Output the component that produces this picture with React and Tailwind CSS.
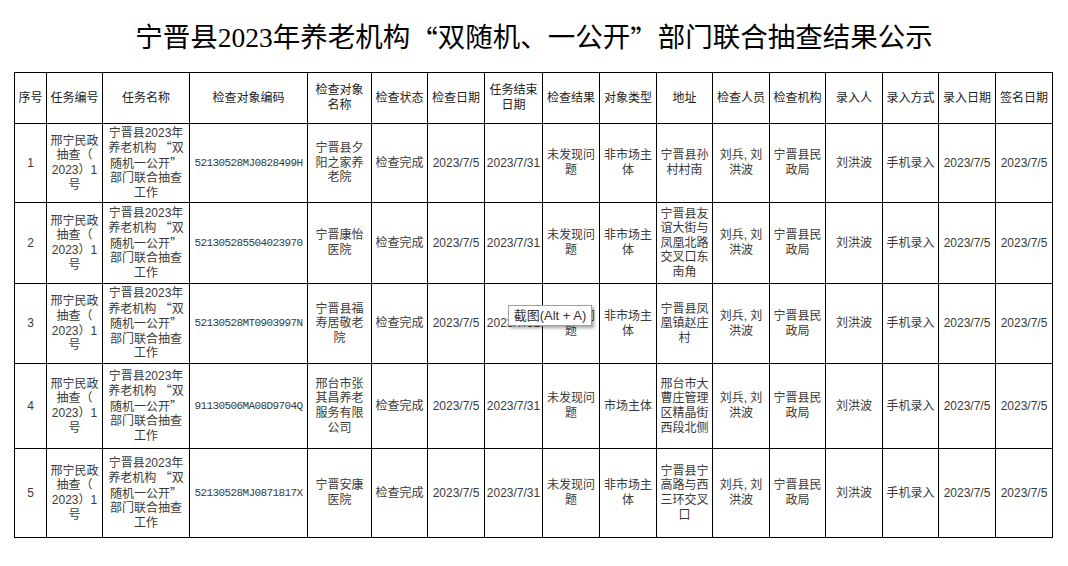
import React from "react";

// column widths, written out so tailwind picks them up
const cols = [
  "w-[32px]", "w-[56px]", "w-[87px]", "w-[118px]", "w-[64px]", "w-[56px]",
  "w-[57px]", "w-[58px]", "w-[57px]", "w-[57px]", "w-[56px]", "w-[57px]",
  "w-[56px]", "w-[57px]", "w-[56px]", "w-[57px]", "w-[57px]",
];

const cjk = "font-['Noto_Sans_CJK_SC',sans-serif]";

const headers = [
  ["序号"],
  ["任务编号"],
  ["任务名称"],
  ["检查对象编码"],
  ["检查对象", "名称"],
  ["检查状态"],
  ["检查日期"],
  ["任务结束", "日期"],
  ["检查结果"],
  ["对象类型"],
  ["地址"],
  ["检查人员"],
  ["检查机构"],
  ["录入人"],
  ["录入方式"],
  ["录入日期"],
  ["签名日期"],
];

const taskNo = ["邢宁民政", "抽查（", "2023）1", "号"];
const taskName = [
  "宁晋县2023年",
  <>
    养老机构 <span className={cjk}>“</span>双
  </>,
  <>
    随机一公开<span className={cjk}>”</span>
  </>,
  "部门联合抽查",
  "工作",
];

const rows = [
  {
    h: "h-[79px]",
    code: "52130528MJ0828499H",
    name: ["宁晋县夕", "阳之家养", "老院"],
    type: ["非市场主", "体"],
    addr: ["宁晋县孙", "村村南"],
  },
  {
    h: "h-[81px]",
    code: "521305285504023970",
    name: ["宁晋康怡", "医院"],
    type: ["非市场主", "体"],
    addr: ["宁晋县友", "谊大街与", "凤凰北路", "交叉口东", "南角"],
  },
  {
    h: "h-[80px]",
    code: "52130528MT0903997N",
    name: ["宁晋县福", "寿居敬老", "院"],
    type: ["非市场主", "体"],
    addr: ["宁晋县凤", "凰镇赵庄", "村"],
  },
  {
    h: "h-[85px]",
    code: "91130506MA08D9704Q",
    name: ["邢台市张", "其昌养老", "服务有限", "公司"],
    type: ["市场主体"],
    addr: ["邢台市大", "曹庄管理", "区精晶街", "西段北侧"],
  },
  {
    h: "h-[89px]",
    code: "52130528MJ0871817X",
    name: ["宁晋安康", "医院"],
    type: ["非市场主", "体"],
    addr: ["宁晋县宁", "高路与西", "三环交叉", "口"],
  },
];

function Lines({ lines }) {
  return lines.map((l, i) => (
    <div key={i} className="whitespace-nowrap">
      {l}
    </div>
  ));
}

function Td({ children, className = "" }) {
  return (
    <td className={"border border-black text-center align-middle px-0 " + className}>
      {children}
    </td>
  );
}

export default function App() {
  return (
    <div className="relative w-[1068px] h-[566px] bg-white text-[#3a3a3a] font-['Liberation_Sans','Noto_Sans_CJK_SC',sans-serif]">
      <div className="h-[72px] flex items-center justify-center pt-[4px] text-[27.5px] leading-[28px] text-black font-['Liberation_Serif','Noto_Sans_CJK_SC',serif]">
        宁晋县2023年养老机构<span className={cjk}>“</span>双随机、一公开<span className={cjk}>”</span>部门联合抽查结果公示
      </div>

      <table className="ml-[14px] table-fixed border-collapse w-[1039px] text-[12px] leading-[14.6px]">
        <colgroup>
          {cols.map((w, i) => (
            <col key={i} className={w} />
          ))}
        </colgroup>
        <thead>
          <tr className="h-[51px]">
            {headers.map((h, i) => (
              <th key={i} className="border border-black text-center align-middle font-normal text-[#222] text-[12px] leading-[15px] px-0">
                <Lines lines={h} />
              </th>
            ))}
          </tr>
        </thead>
        <tbody>
          {rows.map((r, i) => (
            <tr key={i} className={r.h}>
              <Td>{i + 1}</Td>
              <Td>
                <Lines lines={taskNo} />
              </Td>
              <Td>
                <Lines lines={taskName} />
              </Td>
              <Td className="text-[11px] tracking-[-0.6px] font-['Liberation_Mono',monospace]">
                {r.code}
              </Td>
              <Td>
                <Lines lines={r.name} />
              </Td>
              <Td>检查完成</Td>
              <Td>2023/7/5</Td>
              <Td>2023/7/31</Td>
              <Td>
                <Lines lines={["未发现问", "题"]} />
              </Td>
              <Td>
                <Lines lines={r.type} />
              </Td>
              <Td>
                <Lines lines={r.addr} />
              </Td>
              <Td>
                <Lines lines={["刘兵, 刘", "洪波"]} />
              </Td>
              <Td>
                <Lines lines={["宁晋县民", "政局"]} />
              </Td>
              <Td>刘洪波</Td>
              <Td>手机录入</Td>
              <Td>2023/7/5</Td>
              <Td>2023/7/5</Td>
            </tr>
          ))}
        </tbody>
      </table>

      {/* screenshot-tool hint floating over the table */}
      <div className="absolute left-[508px] top-[305px] w-[84px] h-[21px] flex items-center justify-center bg-white border border-[#a0a0a0] shadow-[2px_2px_3px_rgba(0,0,0,0.35)] text-[13px] text-[#333] whitespace-nowrap">
        截图(Alt + A)
      </div>
    </div>
  );
}
